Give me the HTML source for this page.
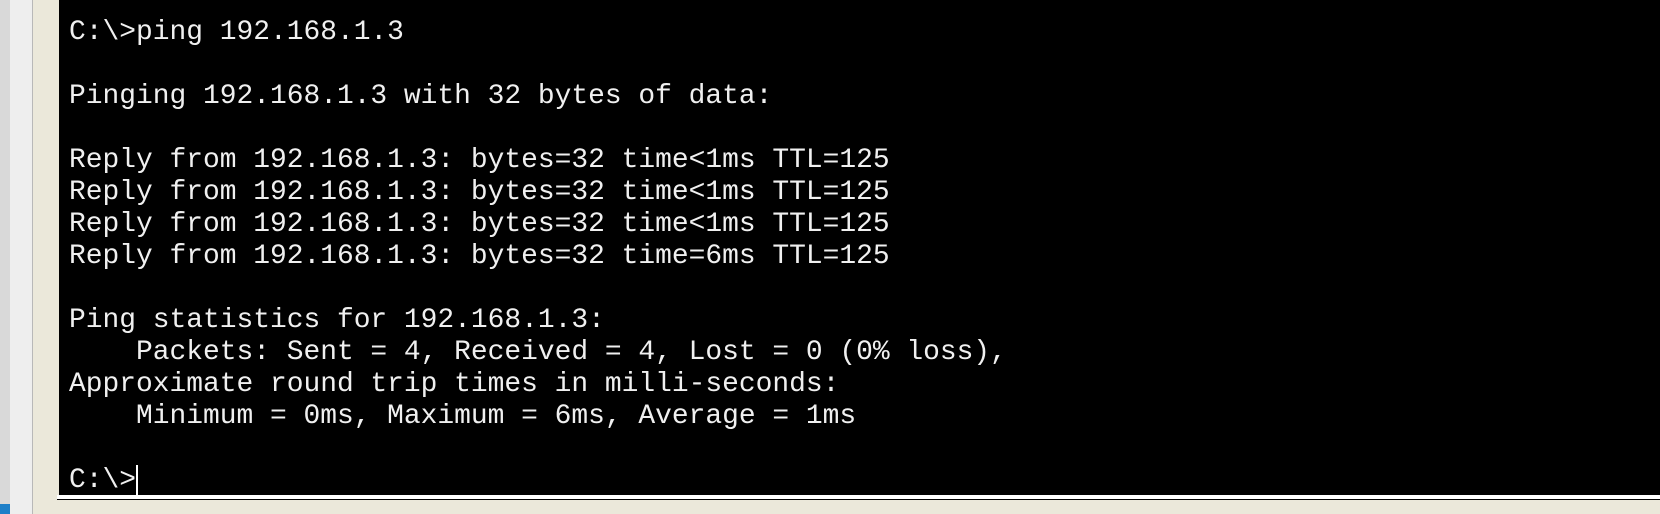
<!DOCTYPE html>
<html><head><style>
html,body{margin:0;padding:0;width:1660px;height:514px;overflow:hidden;background:#ebe8da;position:relative}
.a{position:absolute;left:0;top:0;width:10px;height:514px;background:#d9d9d9}
.a2{position:absolute;left:0;top:504px;width:10px;height:10px;background:#1e7fc8}
.b{position:absolute;left:10px;top:0;width:22px;height:514px;background:#eeeeee}
.c{position:absolute;left:32px;top:0;width:1px;height:514px;background:#b8b8b8}
.term{position:absolute;left:59px;top:0;width:1601px;height:495px;background:#000}
.w{position:absolute;left:57px;top:495px;width:1603px;height:4px;background:#fff}
.l{position:absolute;left:57px;top:499px;width:1603px;height:1px;background:#000}
pre{position:absolute;left:69px;top:17px;margin:0;font-family:"Liberation Mono",monospace;font-size:27.92px;line-height:32px;color:#f0f0f0}
.cur{display:inline-block;width:2px;height:32px;background:#fff;vertical-align:top}
</style></head><body>
<div class="a"></div><div class="a2"></div><div class="b"></div><div class="c"></div>
<div class="term"></div><div class="w"></div><div class="l"></div>
<pre>C:\&gt;ping 192.168.1.3

Pinging 192.168.1.3 with 32 bytes of data:

Reply from 192.168.1.3: bytes=32 time&lt;1ms TTL=125
Reply from 192.168.1.3: bytes=32 time&lt;1ms TTL=125
Reply from 192.168.1.3: bytes=32 time&lt;1ms TTL=125
Reply from 192.168.1.3: bytes=32 time=6ms TTL=125

Ping statistics for 192.168.1.3:
    Packets: Sent = 4, Received = 4, Lost = 0 (0% loss),
Approximate round trip times in milli-seconds:
    Minimum = 0ms, Maximum = 6ms, Average = 1ms

C:\&gt;<span class="cur"></span></pre>
</body></html>
